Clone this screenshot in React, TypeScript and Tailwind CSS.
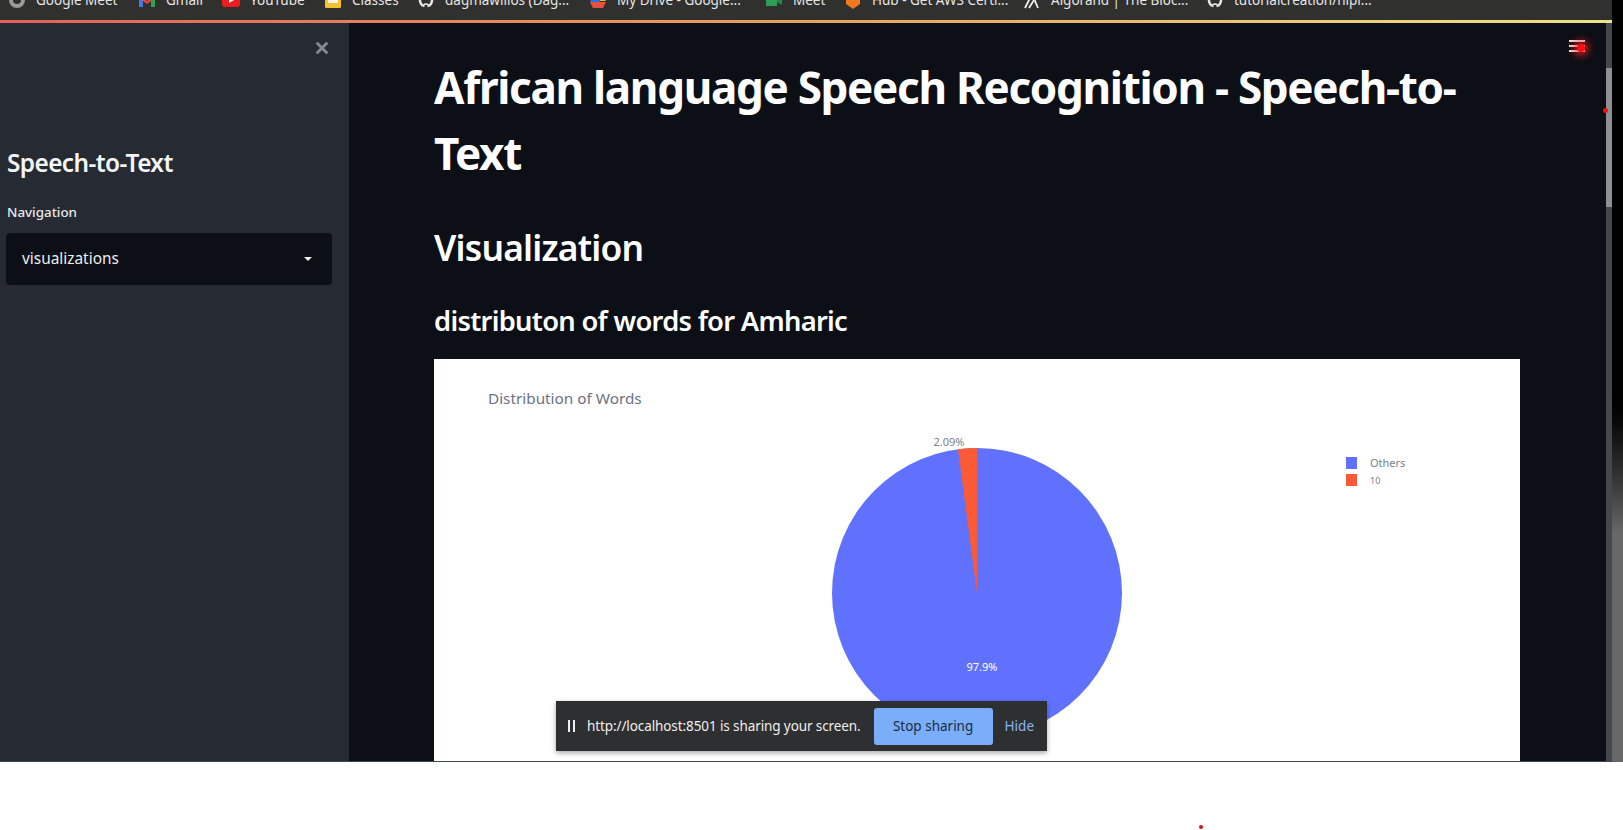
import React from 'react';
import { X } from 'lucide-react';

const SANS = "font-['Noto_Sans','Open_Sans',sans-serif]";

// Bookmark favicons, rough little shapes because the capture is blurry anyway
const MeetIcon = () => (
  <svg width="18" height="18" viewBox="0 0 18 18"><circle cx="9" cy="9" r="8" fill="#9a9a9a" /><circle cx="9" cy="9" r="4" fill="#2f2f2d" /></svg>
);
const GmailIcon = () => (
  <svg width="18" height="18" viewBox="0 0 18 18">
    <rect x="1" y="3" width="4" height="13" fill="#3f7ee8" />
    <rect x="13" y="3" width="4" height="13" fill="#2ea44f" />
    <path d="M1 3l8 7 8-7v4l-8 6-8-6z" fill="#e2483b" />
  </svg>
);
const YoutubeIcon = () => (
  <svg width="18" height="18" viewBox="0 0 18 18"><rect x="0" y="2" width="18" height="14" rx="3" fill="#ee1c1c" /><path d="M7 6l5 3-5 3z" fill="#fff" /></svg>
);
const ClassesIcon = () => (
  <svg width="18" height="18" viewBox="0 0 18 18"><rect x="1" y="1" width="16" height="16" rx="1.5" fill="#f3c22f" /><rect x="4" y="4" width="10" height="8" fill="#f7f3df" /></svg>
);
const GithubIcon = () => (
  <svg width="18" height="18" viewBox="0 0 18 18" fill="none" stroke="#e8e8e8" strokeWidth="2.4">
    <path d="M5 3C2 6 2 12 6 15M13 3c3 3 3 9-1 12" />
    <path d="M7 16c-1-2 0-3 2-3s3 1 2 3" strokeWidth="1.6" />
  </svg>
);
const DriveIcon = () => (
  <svg width="18" height="18" viewBox="0 0 18 18">
    <path d="M6 1h6l5 9H11z" fill="#f2b81f" />
    <path d="M6 1l5 9-3 6-7-6z" fill="#2d6fe0" />
    <path d="M1 11h16l-3 6H4z" fill="#e8503f" />
  </svg>
);
const GMeetIcon = () => (
  <svg width="18" height="18" viewBox="0 0 18 18">
    <rect x="1" y="3" width="11" height="12" fill="#2f9e55" />
    <rect x="1" y="3" width="6" height="6" fill="#2b6fd6" />
    <path d="M12 7l5-3v10l-5-3z" fill="#1f8a46" />
  </svg>
);
const HubIcon = () => (
  <svg width="18" height="18" viewBox="0 0 18 18"><path d="M9 0l7 4v9l-7 5-7-5V4z" fill="#ee7a1f" /></svg>
);
const AlgorandIcon = () => (
  <svg width="18" height="18" viewBox="0 0 18 18" fill="none" stroke="#eee" strokeWidth="1.8"><path d="M2 17L9 3l6 14M6 17l5-8" /></svg>
);

const bookmarks = [
  { label: 'Google Meet', icon: <MeetIcon />, width: 'w-[130px]' },
  { label: 'Gmail', icon: <GmailIcon />, width: 'w-[84px]' },
  { label: 'YouTube', icon: <YoutubeIcon />, width: 'w-[102px]' },
  { label: 'Classes', icon: <ClassesIcon />, width: 'w-[93px]' },
  { label: 'dagmawilios (Dag...', icon: <GithubIcon />, width: 'w-[172px]' },
  { label: 'My Drive - Google...', icon: <DriveIcon />, width: 'w-[176px]' },
  { label: 'Meet', icon: <GMeetIcon />, width: 'w-[79px]' },
  { label: 'Hub - Get AWS Certi...', icon: <HubIcon />, width: 'w-[179px]' },
  { label: 'Algorand | The Bloc...', icon: <AlgorandIcon />, width: 'w-[183px]' },
  { label: 'tutorialcreation/nlpi...', icon: <GithubIcon />, width: 'w-[170px]' },
];

function BookmarkBar() {
  return (
    <div className="h-[20px] shrink-0 overflow-hidden bg-[#30302e] pl-2">
      <div className="-mt-[9px] flex items-center">
        {bookmarks.map((b) => (
          <div key={b.label} className={`flex shrink-0 items-center gap-[10px] ${b.width}`}>
            {b.icon}
            <span className="whitespace-nowrap text-[13.5px] leading-[18px] text-[#e6e6e6]">{b.label}</span>
          </div>
        ))}
      </div>
    </div>
  );
}

function Sidebar() {
  return (
    <aside className="relative flex w-[349px] shrink-0 flex-col bg-[#262a33] pl-[6px] pr-[17px] pt-[124px]">
      <X className="absolute left-[313px] top-[16px] text-[#85878c]" size={18} strokeWidth={4} />
      <h2 className="pl-px text-[24.4px] font-semibold leading-[32px] tracking-[-0.6px] text-[#f4f5f6]">Speech-to-Text</h2>
      <label className="mt-[24px] pl-px text-[13.4px] font-medium leading-[18px] text-[#e6e8ea]">Navigation</label>
      <div className="mt-[12px] flex h-[52px] items-center justify-between rounded bg-[#0c0f15] pl-[16px] pr-[20px] text-[15.4px] text-[#eceded]">
        <span>visualizations</span>
        <span className="h-0 w-0 border-x-[4px] border-t-[4px] border-x-transparent border-t-[#f0f0f0]" />
      </div>
    </aside>
  );
}

// Plotly style pie, as a chart this stays one svg
function PieChart() {
  return (
    <div className="h-[402px] w-full overflow-hidden bg-white">
      <svg width="1087" height="402" viewBox="0 0 1087 402" className="block">
        <text x="54" y="45" fontSize="15.3" fill="#6b7386">Distribution of Words</text>
        <circle cx="543" cy="234" r="145" fill="#6072fd" />
        <path d="M543 234 L524 90.2 A145 145 0 0 1 543 89 Z" fill="#fb5a36" />
        <text x="515" y="87" fontSize="11" textAnchor="middle" fill="#7a7f8c">2.09%</text>
        <text x="548" y="312" fontSize="11" textAnchor="middle" fill="#ffffff">97.9%</text>
        <rect x="912" y="98" width="11" height="12" fill="#6072fd" />
        <rect x="912" y="115" width="11" height="12" fill="#fb5a36" />
        <text x="936" y="108" fontSize="11" fill="#7a7f8c">Others</text>
        <text x="936" y="125" fontSize="9" fill="#7a7f8c">10</text>
      </svg>
    </div>
  );
}

function ShareNotice() {
  return (
    <div className="absolute left-[556px] top-[701px] flex h-[50px] w-[491px] items-center bg-[#2e2f31] pl-3 pr-[13px] shadow-[0_2px_5px_rgba(0,0,0,0.35)]">
      <span className="flex gap-[3px]">
        <i className="block h-[12px] w-[2px] bg-[#f0f0f0]" />
        <i className="block h-[12px] w-[2px] bg-[#f0f0f0]" />
      </span>
      <span className="ml-[12px] whitespace-nowrap text-[13.5px] tracking-[-0.1px] text-[#eeeeee]">http://localhost:8501 is sharing your screen.</span>
      <button className="ml-auto h-[37px] w-[119px] rounded-[3px] bg-[#7aaef9] text-[13.5px] text-[#1c2b44]">Stop sharing</button>
      <span className="ml-[12px] text-[13.5px] text-[#8ab4f8]">Hide</span>
    </div>
  );
}

export default function App() {
  return (
    <div className={`relative flex h-[830px] w-[1623px] flex-col overflow-hidden bg-white ${SANS}`}>
      <div className="flex h-[762px] shrink-0">
        <div className="flex min-w-0 flex-1 flex-col">
          <BookmarkBar />
          <div className="h-[3px] shrink-0 bg-gradient-to-r from-[#e0625a] via-[#e8a060] to-[#ece28a]" />

          <div className="flex min-h-0 flex-1 border-b border-[#3c4650]">
            <Sidebar />
            <main className="relative min-w-0 flex-1 overflow-hidden bg-[#0c0f15] pl-[85px] pr-[86px] pt-[31px]">
              <h1 className="text-[44px] font-bold leading-[66px] tracking-[-1.3px] text-white">African language Speech Recognition - Speech-to-Text</h1>
              <h2 className="mt-[38px] text-[35.4px] font-semibold leading-[46px] tracking-[-0.8px] text-white">Visualization</h2>
              <h3 className="mt-[32px] text-[27.3px] font-semibold leading-[38px] tracking-[-0.7px] text-white">distributon of words for Amharic</h3>
              <div className="mt-[19px]">
                <PieChart />
              </div>

              {/* hamburger with the screen recorder's red pointer on top */}
              <div className="absolute left-[1220px] top-[17px] flex w-[16px] flex-col gap-[3px]">
                <i className="block h-[2px] bg-[#e8e8e8]" />
                <i className="block h-[2px] bg-[#e8e8e8]" />
                <i className="block h-[2px] bg-[#e8e8e8]" />
              </div>
              <i className="absolute left-[1228px] top-[21px] block h-2 w-2 rounded-full bg-[#ff1010] shadow-[0_0_7px_4px_rgba(255,30,30,0.7)]" />
            </main>
            <div className="flex w-[6px] shrink-0 flex-col bg-[#44474e] pt-[45px]">
              <div className="h-[139px] bg-[#8c8f94]" />
            </div>
          </div>
        </div>
        <div className="w-[11px] shrink-0 bg-gradient-to-b from-[#000000] from-50% to-[#686868] to-70%" />
      </div>

      <ShareNotice />
      <i className="absolute left-[1603px] top-[108px] block h-[5px] w-[5px] rounded-full bg-[#f01010]" />
      <i className="absolute left-[1199px] top-[825px] block h-[4px] w-[4px] rounded-full bg-[#e01010]" />
    </div>
  );
}
